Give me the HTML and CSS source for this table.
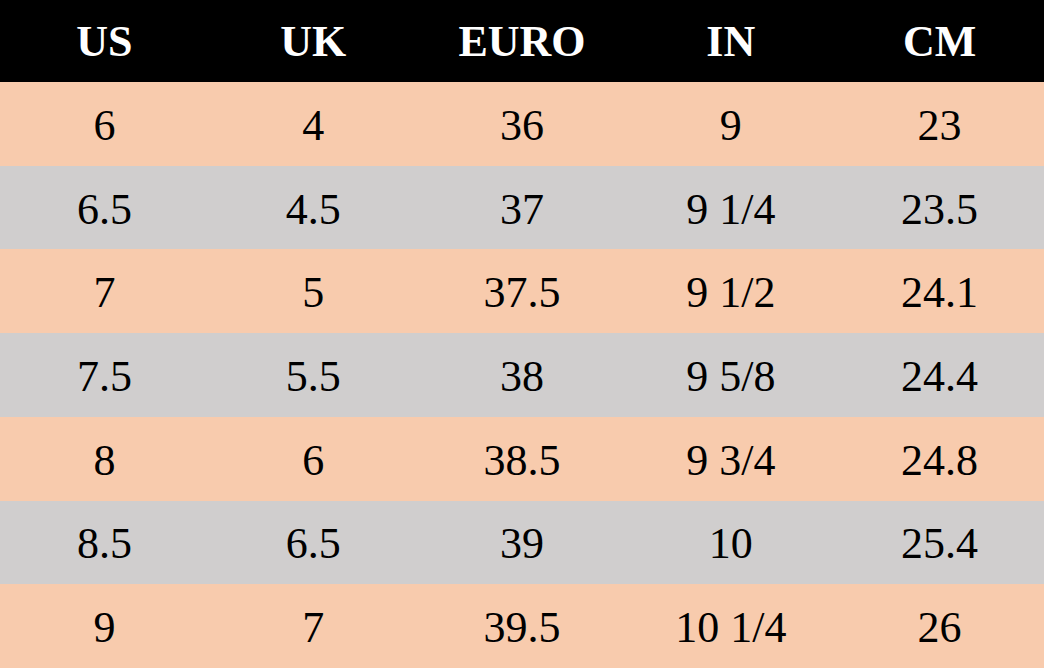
FILE: index.html
```html
<!DOCTYPE html>
<html>
<head>
<meta charset="utf-8">
<link rel="stylesheet" href="styles.css">
</head>
<body>
<div class="chart">
  <div class="row head"><div>US</div><div>UK</div><div>EURO</div><div>IN</div><div>CM</div></div>
  <div class="row peach"><div>6</div><div>4</div><div>36</div><div>9</div><div>23</div></div>
  <div class="row gray"><div>6.5</div><div>4.5</div><div>37</div><div>9 1/4</div><div>23.5</div></div>
  <div class="row peach"><div>7</div><div>5</div><div>37.5</div><div>9 1/2</div><div>24.1</div></div>
  <div class="row gray"><div>7.5</div><div>5.5</div><div>38</div><div>9 5/8</div><div>24.4</div></div>
  <div class="row peach"><div>8</div><div>6</div><div>38.5</div><div>9 3/4</div><div>24.8</div></div>
  <div class="row gray"><div>8.5</div><div>6.5</div><div>39</div><div>10</div><div>25.4</div></div>
  <div class="row peach"><div>9</div><div>7</div><div>39.5</div><div>10 1/4</div><div>26</div></div>
</div>
</body>
</html>
```
FILE: styles.css
```css
html, body {
  margin: 0;
  padding: 0;
}
body {
  width: 1044px;
  height: 668px;
  overflow: hidden;
  font-family: "Liberation Serif", "Times New Roman", serif;
}
.chart {
  display: grid;
  grid-template-rows: 82px repeat(7, 1fr);
  height: 668px;
}
.row {
  display: grid;
  grid-template-columns: repeat(5, 1fr);
  align-items: center;
  text-align: center;
  font-size: 44px;
  color: #000;
  white-space: pre;
  padding-top: 3px;
}
.head {
  background: #000;
  color: #fff;
  font-weight: bold;
  padding-top: 0;
}
.peach {
  background: #f8cbad;
}
.gray {
  background: #d0cece;
}
```
